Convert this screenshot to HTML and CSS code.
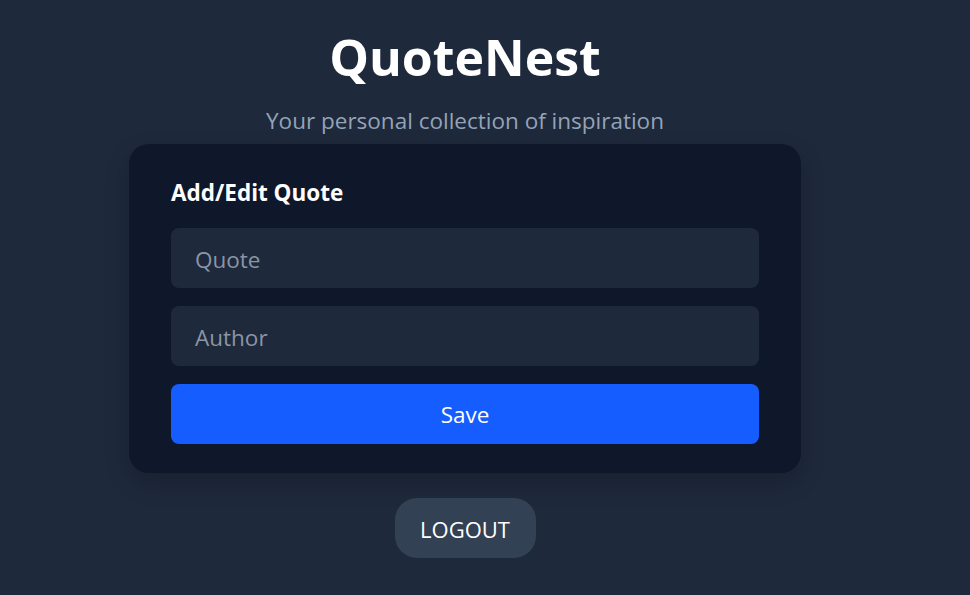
FILE: index.html
```html
<!DOCTYPE html>
<html lang="en">
<head>
<meta charset="utf-8">
<title>QuoteNest</title>
<link rel="stylesheet" href="styles.css">
</head>
<body>
<main class="page">
  <h1 class="title">QuoteNest</h1>
  <p class="subtitle">Your personal collection of inspiration</p>
  <section class="card">
    <h2 class="card-title">Add/Edit Quote</h2>
    <input class="field" type="text" placeholder="Quote">
    <input class="field" type="text" placeholder="Author">
    <button class="save">Save</button>
  </section>
  <button class="logout">LOGOUT</button>
</main>
</body>
</html>
```
FILE: styles.css
```css
* { box-sizing: border-box; }
html, body {
  margin: 0;
  padding: 0;
  background: #1e293b;
  height: 100%;
}
body {
  font-family: "Open Sans", "Noto Sans", "Liberation Sans", sans-serif;
  color: #fff;
}
.page {
  display: flex;
  flex-direction: column;
  align-items: center;
  padding: 27px 40px 0 0;
}
.title {
  margin: 0;
  font-size: 50px;
  line-height: 60px;
  font-weight: 700;
}
.subtitle {
  margin: 18px 0 7px;
  font-size: 22.5px;
  line-height: 32px;
  color: #94a3b8;
}
.card {
  width: 672px;
  background: #0f172a;
  border-radius: 20px;
  padding: 30px 42px 29px;
  display: flex;
  flex-direction: column;
  gap: 18px;
  box-shadow: 0 10px 25px rgba(0, 0, 0, 0.2);
}
.card-title {
  margin: 0;
  padding-top: 1px;
  font-size: 22.5px;
  line-height: 35px;
  font-weight: 700;
}
.field {
  height: 60px;
  border: none;
  border-radius: 8px;
  background: #1e293b;
  color: #fff;
  padding: 2px 24px 0;
  font-family: inherit;
  font-size: 22.5px;
  outline: none;
}
.field::placeholder { color: #8b95a5; }
.save {
  height: 60px;
  border: none;
  border-radius: 8px;
  background: #165dff;
  color: #fff;
  font-family: inherit;
  font-size: 22.5px;
  padding-top: 2px;
}
.logout {
  margin-top: 25px;
  width: 141px;
  height: 60px;
  border: none;
  border-radius: 22px;
  background: #334155;
  color: #fff;
  font-family: inherit;
  font-size: 22px;
  padding-top: 2px;
}
```
